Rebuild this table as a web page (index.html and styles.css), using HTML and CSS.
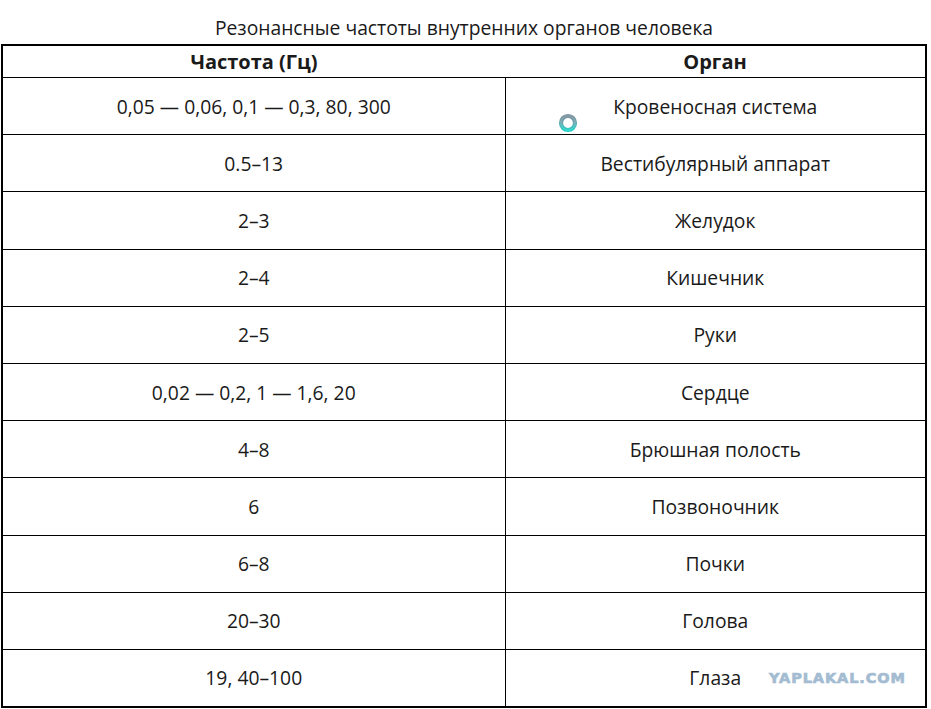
FILE: index.html
```html
<!DOCTYPE html>
<html lang="ru">
<head>
<meta charset="utf-8">
<title>Резонансные частоты</title>
<link rel="stylesheet" href="styles.css">
</head>
<body>
<div class="page">
  <h1 class="title">Резонансные частоты внутренних органов человека</h1>
  <table class="freq">
    <thead>
      <tr><th class="c1">Частота (Гц)</th><th class="c2">Орган</th></tr>
    </thead>
    <tbody>
      <tr><td class="c1">0,05 — 0,06, 0,1 — 0,3, 80, 300</td><td class="c2">Кровеносная система</td></tr>
      <tr><td class="c1">0.5–13</td><td class="c2">Вестибулярный аппарат</td></tr>
      <tr><td class="c1">2–3</td><td class="c2">Желудок</td></tr>
      <tr><td class="c1">2–4</td><td class="c2">Кишечник</td></tr>
      <tr><td class="c1">2–5</td><td class="c2">Руки</td></tr>
      <tr><td class="c1">0,02 — 0,2, 1 — 1,6, 20</td><td class="c2">Сердце</td></tr>
      <tr><td class="c1">4–8</td><td class="c2">Брюшная полость</td></tr>
      <tr><td class="c1">6</td><td class="c2">Позвоночник</td></tr>
      <tr><td class="c1">6–8</td><td class="c2">Почки</td></tr>
      <tr><td class="c1">20–30</td><td class="c2">Голова</td></tr>
      <tr><td class="c1">19, 40–100</td><td class="c2">Глаза</td></tr>
    </tbody>
  </table>
  <svg class="ring" width="22" height="22" viewBox="0 0 22 22">
    <defs>
      <linearGradient id="rg" x1="0" y1="0" x2="0" y2="1">
        <stop offset="0" stop-color="#7a8e9c"/>
        <stop offset="0.45" stop-color="#6aa6b0"/>
        <stop offset="1" stop-color="#22d0c6"/>
      </linearGradient>
    </defs>
    <circle cx="11" cy="11" r="7" fill="none" stroke="url(#rg)" stroke-width="4.2"/>
    <circle cx="11" cy="11" r="7.2" fill="none" stroke="#ffffff" stroke-opacity="0.25" stroke-width="0.8"/>
  </svg>
  <div class="watermark">YAPLAKAL.COM</div>
</div>
</body>
</html>
```
FILE: styles.css
```css
html, body {
  margin: 0;
  padding: 0;
  background: #ffffff;
}
.page {
  position: relative;
  width: 931px;
  height: 709px;
  padding-left: 1px;
  box-sizing: border-box;
  font-family: "Open Sans", "Noto Sans", sans-serif;
  color: #1a1a1a;
}
.title {
  margin: 0;
  width: 926px;
  height: 44px;
  box-sizing: border-box;
  padding-top: 16px;
  text-align: center;
  font-size: 19.3px;
  font-weight: 400;
  line-height: 24px;
}
.freq {
  width: 926px;
  border-collapse: collapse;
  table-layout: fixed;
  border: 2px solid #000;
}
.freq .c1 { width: 502px; }
.freq th {
  height: 31px;
  padding: 0;
  font-size: 20px;
  font-weight: 700;
  text-align: center;
  border-bottom: 1px solid #000;
}
.freq td {
  height: 56.2px;
  padding: 0;
  font-size: 19.3px;
  font-weight: 400;
  text-align: center;
  border-top: 1px solid #000;
  border-bottom: 1px solid #000;
}
.freq td.c1 {
  border-right: 1px solid #000;
}
.ring {
  position: absolute;
  left: 557px;
  top: 112px;
}
.watermark {
  position: absolute;
  left: 769px;
  top: 670px;
  font-family: "DejaVu Sans", sans-serif;
  font-weight: 700;
  font-size: 14.5px;
  letter-spacing: 0.9px;
  color: #a3bcd1;
  -webkit-text-stroke: 0.7px #a3bcd1;
}
```
